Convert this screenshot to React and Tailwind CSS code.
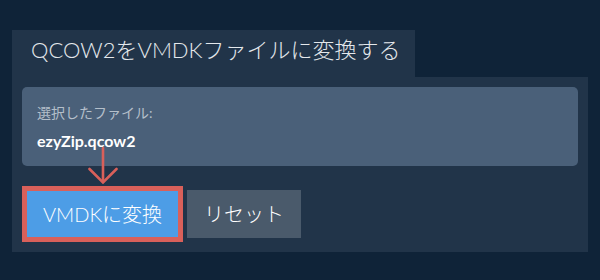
import React from 'react'

const font = { fontFamily: '"Lato", "Noto Sans CJK JP", sans-serif' }

const App = () => {
  return (
    <div
      className="w-[600px] h-[280px] bg-[#0f2338] pt-[30px] pl-[12px]"
      style={font}
    >
      <div className="w-[403px] h-[47px] bg-[#213449] pl-[19px] pt-[5px]">
        <h1 className="text-[22px] leading-[30px] text-[#e4e8ec] font-light whitespace-nowrap">
          QCOW2をVMDKファイルに変換する
        </h1>
      </div>
      <div className="relative w-[576px] bg-[#213449] px-[10px] pt-[10px] pb-[10px]">
        <div className="h-[79px] rounded-[5px] bg-[#4a6079] pl-[15px] pt-[16px]">
          <p className="text-[14px] leading-[20px] text-[#b4bfca]">選択したファイル:</p>
          <p className="text-[16px] leading-[22px] mt-[7px] font-bold text-white">ezyZip.qcow2</p>
        </div>
        <svg
          className="absolute left-[76px] top-[70px]"
          width="30"
          height="38"
          viewBox="0 0 30 38"
          fill="none"
          stroke="#d9605a"
          strokeWidth="2.6"
          strokeLinecap="round"
        >
          <line x1="15" y1="1" x2="15" y2="35" />
          <polyline points="1.5,22 15,35.5 28.5,22" />
        </svg>
        <div className="flex items-center mt-[20px]">
          <div className="border-[5px] border-[#d9605a] h-[56px] w-[161px]">
            <button className="w-full h-full bg-[#4d9de6] text-white text-[20px] font-light">
              VMDKに変換
            </button>
          </div>
          <button className="ml-[4px] w-[114px] h-[48px] bg-[#4a5a6b] text-white text-[20px] font-light">
            リセット
          </button>
        </div>
      </div>
    </div>
  )
}

export default App
